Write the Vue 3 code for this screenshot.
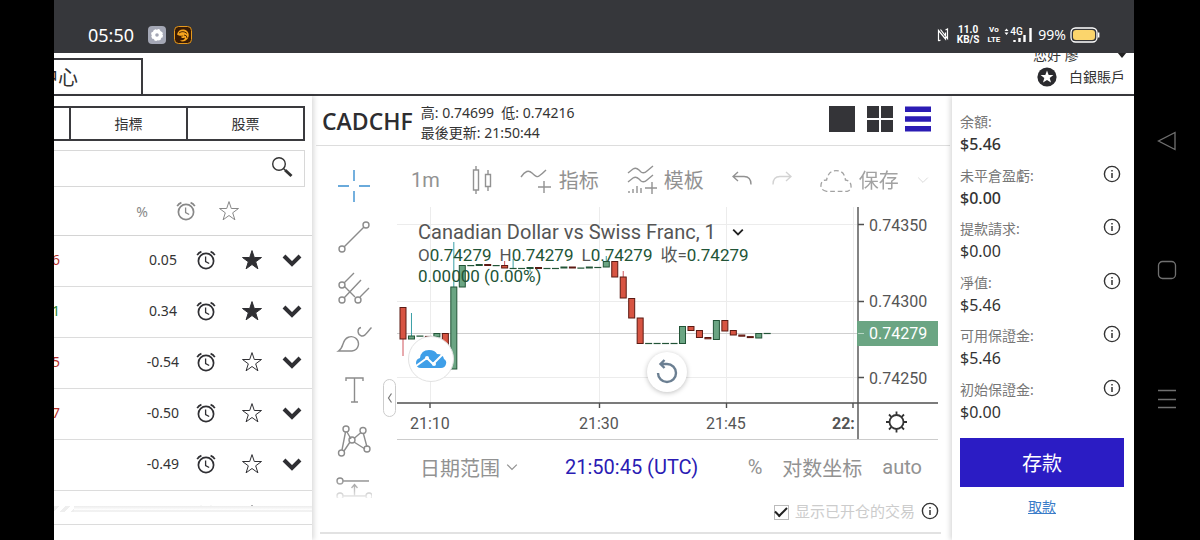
<template>
  <div class="device">
    <svg class="sprite" aria-hidden="true">
      <symbol id="clock" viewBox="0 0 20 20">
        <g fill="none" stroke="currentColor" stroke-width="1.7">
          <circle cx="10" cy="11" r="7.6" />
          <path d="M9.6 6.5v5l3.6 2" stroke-width="1.3" />
          <path d="M1.2 5.2Q2.6 2.6 5.4 1.6M18.8 5.2Q17.4 2.6 14.6 1.6" />
        </g>
      </symbol>
      <symbol id="star" viewBox="0 0 22 22">
        <path d="M11 1.6l2.3 6.9h7.2l-5.8 4.3 2.2 7-5.9-4.3-5.9 4.3 2.2-7L1.5 8.5h7.2z" stroke="currentColor" stroke-width="1" />
      </symbol>
      <symbol id="info" viewBox="0 0 18 18">
        <circle cx="9" cy="9" r="7.6" fill="none" stroke="currentColor" stroke-width="1.4" />
        <path d="M9 8v5M9 5v1.6" stroke="currentColor" stroke-width="1.5" />
      </symbol>
      <symbol id="chevron" viewBox="0 0 20 20">
        <path d="M2 6l8 8 8-8" fill="none" stroke="currentColor" />
      </symbol>
    </svg>

    <div class="bezel"></div>

    <div class="screen">
      <header class="status">
        <span class="time">05:50</span>
        <svg class="app-icon" viewBox="0 0 18 18">
          <rect width="18" height="18" rx="4" fill="#a4a7b5" />
          <circle cx="9" cy="9" r="3.6" fill="none" stroke="#fff" stroke-width="3.6" />
          <circle cx="9" cy="9" r="5.2" fill="none" stroke="#fff" stroke-width="1.5" stroke-dasharray="2.4 1.7" />
        </svg>
        <svg class="app-icon" viewBox="0 0 18 18">
          <rect x=".5" y=".5" width="17" height="17" rx="4" fill="#3a1c05" stroke="#e89a1c" />
          <path d="M3 8.5C4 4 9 2 13 5c3 3 2 8-2 10-2 .8-4 .5-5-.5 3 0 5-1 5-3-2 1-4 .5-4-1 1 .3 2 0 2.5-1C7 10 5 10 3 8.5z" fill="#f7a51e" />
          <path d="M5 7q4-3 8 .5M10 9q3 0 3 3" fill="none" stroke="#3a1c05" stroke-width=".9" />
        </svg>
        <div class="signals">
          <svg class="nfc" viewBox="0 0 12 14"><path d="M1.500 13V2.500l7 8.500V4.500M1.500 13l2-1M3.500 1.500l7 9V1l-2 1" fill="none" stroke="#fff" stroke-width="1.200" /></svg>
          <span class="stack rate"><b>11.0</b><b>KB/S</b></span>
          <span class="stack lte"><b>Vo</b><b>LTE</b></span>
          <span class="cell">
            <svg viewBox="0 0 30 16">
              <path d="M.5 4L2.500 1.500 4.500 4zM.5 5.500L2.500 8l2-2.500z" fill="#fff" />
              <path d="M10.500 15v-2M15.500 15v-4M20.500 15V8M26.500 15V1" stroke="#fff" stroke-width="2.400" />
            </svg>
            <b>4G</b>
          </span>
          <span class="percent">99%</span>
          <svg class="battery" viewBox="0 0 30 16">
            <rect x="1" y="1" width="26" height="14" rx="4.5" fill="none" stroke="#fff" stroke-width="1.3" />
            <rect x="3" y="3" width="22" height="10" rx="3" fill="#fbd56c" />
            <path d="M28.700 5.500v5" stroke="#fff" stroke-width="1.400" />
          </svg>
        </div>
      </header>

      <div class="topbar">
        <button class="page-tab"><span>中心</span></button>
        <div class="user">
          <div class="greeting"><span>您好 廖</span><svg viewBox="0 0 10 6"><path d="M0 0h10L5 6z" fill="#222" /></svg></div>
          <div class="level">
            <svg viewBox="0 0 20 20">
              <circle cx="10" cy="10" r="9.6" fill="#2a2a2e" />
              <path d="M10 3.500l1.700 4.400 4.700.2-3.700 3 1.300 4.500-4-2.600-4 2.600 1.300-4.500-3.700-3 4.700-.2z" fill="#fff" />
            </svg>
            <span>白銀賬戶</span>
          </div>
        </div>
      </div>

      <main class="workspace">
        <section class="watchlist">
          <nav class="tabs">
            <button></button>
            <button>指標</button>
            <button>股票</button>
          </nav>
          <div class="search">
            <input type="text" aria-label="search" />
            <button aria-label="search">
              <svg viewBox="0 0 22 22">
                <circle cx="8" cy="8" r="6.3" fill="none" stroke="#333" stroke-width="1.4" />
                <path d="M12.500 12.500l1.500 1.500" stroke="#333" stroke-width="1.400" />
                <path d="M14 14l6.500 6" stroke="#333" stroke-width="3" />
              </svg>
            </button>
          </div>
          <div class="list-head">
            <span>%</span>
            <svg class="i20"><use href="#clock" /></svg>
            <svg class="i22 hollow"><use href="#star" /></svg>
          </div>
          <div class="rows">
            <div v-for="(row, i) in rows" :key="i" class="row">
              <span class="price" :class="row.dir"><span>{{ row.price }}</span></span>
              <span class="change">{{ row.change }}</span>
              <button aria-label="alert"><svg class="i20"><use href="#clock" /></svg></button>
              <button aria-label="favourite"><svg class="i22" :class="row.fav ? 'solid' : 'hollow'"><use href="#star" /></svg></button>
              <button aria-label="expand"><svg class="i20 thick"><use href="#chevron" /></svg></button>
            </div>
          </div>
          <div class="list-foot"></div>
        </section>

        <section class="chart-panel">
          <div class="chart-head">
            <h1>CADCHF</h1>
            <p>高: 0.74699&nbsp; 低: 0.74216<br />最後更新: 21:50:44</p>
            <div class="views">
              <button aria-label="single"><svg viewBox="0 0 26 26"><path d="M0 0h26v26H0z" fill="#343438" /></svg></button>
              <button aria-label="grid"><svg viewBox="0 0 26 26"><path d="M0 0h12v12H0zM14 0h12v12H14zM0 14h12v12H0zM14 14h12v12H14z" fill="#343438" /></svg></button>
              <button aria-label="list"><svg viewBox="0 0 26 26"><path d="M0 .5h26v5.500H0zM0 10.200h26v5.500H0zM0 20h26v5.500H0z" fill="#2b1cb4" /></svg></button>
            </div>
          </div>

          <div class="chart-body">
            <div class="tools">
              <button aria-label="cross"><svg class="blue" viewBox="0 0 36 36"><path d="M18 2v11M18 23v11M2 18h11M23 18h11" /></svg></button>
              <button aria-label="line"><svg viewBox="0 0 36 36"><path d="M8 28L28 8" /><circle cx="6" cy="30" r="3" /><circle cx="30" cy="6" r="3" /></svg></button>
              <button aria-label="pitchfork">
                <svg viewBox="0 0 36 36"><path d="M8 28L25 10M8 13L18 3M8 16l11 11M24 27l9-9M14 22l0 0" /><circle cx="6" cy="15" r="3" /><circle cx="6" cy="30" r="3" /><circle cx="22" cy="30" r="3" /></svg>
              </button>
              <button aria-label="brush">
                <svg viewBox="0 0 36 36"><path d="M2.500 30q3-2 4.500-7c2-7 8-9 12.500-6 5 4 3.500 12-3.500 13zM25 6.500c-4 1-4 7 .5 8.500 3 .5 4-1.500 10-8.500" /></svg>
              </button>
              <button aria-label="text"><svg viewBox="0 0 36 36"><path d="M10 9V6h17v3M18.500 6v24M15 30h7" /></svg></button>
              <button aria-label="pattern">
                <svg viewBox="0 0 36 36"><path d="M9.500 9L6 27M11 9l4 7M25 9.500l-7 6M27.500 11L31 24M8 28l6-9M18 19l11 7" /><circle cx="10" cy="6" r="3" /><circle cx="27" cy="7.5" r="3" /><circle cx="16" cy="17" r="3" /><circle cx="5.5" cy="30" r="3" /><circle cx="31" cy="26" r="3" /></svg>
              </button>
              <button class="faded" aria-label="position">
                <svg viewBox="0 0 36 36"><path d="M7 7h26M18.500 22V11M15.500 14l3-3.500 3 3.500M7 22h23" /><circle cx="4" cy="7" r="3" /><circle cx="4" cy="22" r="3" /><circle cx="33" cy="22" r="3" /></svg>
              </button>
            </div>

            <div class="chart-main">
              <div class="toolbar">
                <button>1m</button>
                <button aria-label="candles"><svg class="w24" viewBox="2 0 24 30"><path d="M7.500 5h5v20h-5zM10 1v4M10 25v4M19.500 9.500h5v12h-5zM22 5v4.500M22 21.500v4.500" /></svg></button>
                <button><svg class="w32" viewBox="0 0 32 30"><path d="M1 12q6-9 11-4t7 3q3-2 7-6M24 16v12M18 22h13" /></svg>指标</button>
                <button>
                  <svg class="w30" viewBox="0 0 30 30"><path d="M1 8l5-4q3-2 6 1l2 2q3 2 6-1l6-5M1 17l5-4q3-2 6 1l2 2q3 2 6-1l6-5M25 17v12M18 23h12M2 26v2M6 24v4M10 21v7M14 23v5" /></svg>模板
                </button>
                <div class="history">
                  <button aria-label="undo"><svg class="w20" viewBox="0 0 20 20"><path d="M6 2L1 6.500 6 11M1 6.500h11q7 0 7 8" /></svg></button>
                  <button class="off" aria-label="redo"><svg class="w20" viewBox="0 0 20 20"><path d="M14 2l5 4.500-5 4.500M19 6.500H8q-7 0-7 8" /></svg></button>
                </div>
                <button class="save">
                  <svg class="w32" viewBox="0 0 34 30"><path d="M7 27q-6-1-6-6 0-6 6-6 2-10 10-10 9 0 10 10 6 1 6 7 0 4-4 5z" stroke-dasharray="5 3" /></svg>保存
                </button>
                <button class="off" aria-label="more"><svg class="w12"><use href="#chevron" /></svg></button>
              </div>

              <div class="plot">
                <svg class="canvas" viewBox="397 207 541 233">
                  <path class="grid" d="M397 224.500h460M397 301.500h460M397 377.500h460M430.500 207v196M599.500 207v196M726.500 207v196M853.500 207v196" />
                  <path class="last" d="M397 333.500h460" />
                  <g v-for="(c, i) in candles" :key="i">
                    <path v-if="c.hi" :d="`M${cx(i)} ${c.hi}V${c.top}`" :stroke="c.up ? '#3a9fa6' : '#d0555c'" />
                    <path v-if="c.lo" :d="`M${cx(i)} ${c.bottom}V${c.lo}`" :stroke="c.up ? '#3a9fa6' : '#d0555c'" />
                    <rect :x="cx(i) - 3" :y="c.top" width="6" :height="c.bottom - c.top" :class="c.up ? 'up' : 'down'" />
                  </g>
                  <path class="frame" d="M397 439.500h541" />
                  <path class="axis" d="M397 403h541M858 207v232M858 224.500h6M858 301.500h6M858 377.500h6M430 403v5M599.500 403v5M726.500 403v5M853 403v5" />
                  <rect x="857" y="321" width="81" height="25" fill="#6ba583" />
                  <path d="M858 333.500h6" stroke="#b9d8c6" />
                  <text v-for="p in prices" :key="p.label" x="869" :y="p.y" :class="{ current: p.current }">{{ p.label }}</text>
                  <text x="410" y="429">21:10</text>
                  <text x="579" y="429">21:30</text>
                  <text x="706" y="429">21:45</text>
                  <text x="832" y="429" class="bold">22:</text>
                  <g class="gear">
                    <circle cx="896.5" cy="422" r="7" />
                    <path d="M896.500 411.500v3M896.500 429.500v3M886 422h3M904 422h3M889 414.500l2.300 2.300M904 414.500l-2.300 2.300M889 429.500l2.300-2.300M904 429.500l-2.300-2.300" />
                  </g>
                </svg>
                <div class="legend">
                  <div class="name">Canadian Dollar vs Swiss Franc, 1 <svg class="w12"><use href="#chevron" /></svg></div>
                  <div class="ohlc">
                    <span>O<i>0.74279</i></span><span>H<i>0.74279</i></span><span>L<i>0.74279</i></span><span>收=<i>0.74279</i></span>
                  </div>
                  <div class="ohlc"><i>0.00000 (0.00%)</i></div>
                </div>
                <span class="logo">
                  <svg viewBox="0 0 32 20">
                    <path d="M6 19q-5 0-5-5 0-4 4-5 1-8 9-8 6 0 8 4 6 0 7 5 3 2 2 5-1 4-5 4z" fill="#3f9fe8" />
                    <path d="M1 17l11-8 6 6 10-10" fill="none" stroke="#fff" stroke-width="2" />
                    <circle cx="12" cy="9" r="2" fill="#fff" /><circle cx="19" cy="15" r="2" fill="#fff" />
                  </svg>
                </span>
                <button class="reset" aria-label="reset">
                  <svg viewBox="0 0 24 26"><path d="M3 14a9 9 0 1 0 9-9H6M9.500 1L5.500 5l4 4" fill="none" stroke="#6b7f92" stroke-width="2.400" /></svg>
                </button>
                <button class="collapse" aria-label="collapse"><svg viewBox="0 0 6 12"><path d="M4.500 1.500L1.500 6l3 4.500" fill="none" stroke="#777" stroke-width="1.200" /></svg></button>
              </div>

              <div class="rangebar">
                <button>日期范围<svg class="w12"><use href="#chevron" /></svg></button>
                <button class="utc">21:50:45 (UTC)</button>
                <div class="scales">
                  <button>%</button>
                  <button>对数坐标</button>
                  <button>auto</button>
                </div>
              </div>
            </div>
          </div>

          <div class="options">
            <input id="show-open" type="checkbox" checked />
            <label for="show-open">显示已开仓的交易</label>
            <svg class="i18"><use href="#info" /></svg>
          </div>
        </section>

        <aside class="account">
          <dl>
            <div v-for="(item, i) in balances" :key="item.label">
              <dt>{{ item.label }}<svg v-if="i > 0" class="i18"><use href="#info" /></svg></dt>
              <dd :class="{ strong: i < 2 }">{{ item.value }}</dd>
            </div>
          </dl>
          <button class="deposit">存款</button>
          <a href="#" class="withdraw">取款</a>
        </aside>
      </main>
    </div>

    <nav class="keys">
      <button aria-label="back"><svg viewBox="0 0 20 20"><path d="M18 1.500v17L1.500 10z" /></svg></button>
      <button aria-label="home"><svg viewBox="0 0 20 20"><rect x="1.5" y="1.5" width="17" height="17" rx="4" /></svg></button>
      <button aria-label="recent"><svg viewBox="0 0 20 20"><path d="M1 1.500h18M1 10.500h18M1 18.500h18" /></svg></button>
    </nav>
  </div>
</template>

<script setup>
const rows = [
  { price: '6', dir: 'fall', change: '0.05', fav: true },
  { price: '1', dir: 'rise', change: '0.34', fav: true },
  { price: '5', dir: 'fall', change: '-0.54', fav: false },
  { price: '7', dir: 'fall', change: '-0.50', fav: false },
  { price: '', dir: 'fall', change: '-0.49', fav: false },
  { price: '', dir: 'fall', change: '', fav: false },
]

const balances = [
  { label: '余額:', value: '$5.46' },
  { label: '未平倉盈虧:', value: '$0.00' },
  { label: '提款請求:', value: '$0.00' },
  { label: '凈值:', value: '$5.46' },
  { label: '可用保證金:', value: '$5.46' },
  { label: '初始保證金:', value: '$0.00' },
]

const prices = [
  { label: '0.74350', y: 231 },
  { label: '0.74300', y: 307 },
  { label: '0.74279', y: 339, current: true },
  { label: '0.74250', y: 384 },
]

const cx = (i) => 403 + i * 8.47

// up?, top, bottom, high, low
const candles = [
  [0, 307.5, 339, 0, 356],
  [1, 336, 339, 313],
  [1, 336, 336.2],
  [0, 336.4, 336.6],
  [1, 333.5, 337],
  [0, 333.5, 346],
  [1, 287, 369, 242],
  [1, 265.5, 287],
  [1, 265.5, 265.7],
  [1, 264.5, 265.5],
  [0, 264.5, 265.5],
  [1, 265.5, 265.7],
  [0, 265.5, 268, 261],
  [1, 268.4, 268.6, 259],
  [1, 268.4, 268.6],
  [1, 267.5, 268.5, 0, 272],
  [0, 267.5, 268.5],
  [1, 268.4, 268.6],
  [1, 268.4, 268.6],
  [1, 267, 268],
  [0, 267, 268],
  [1, 268, 268.2],
  [1, 267, 268],
  [1, 267.4, 267.6],
  [1, 261.5, 267, 256],
  [0, 261.5, 277],
  [0, 277, 298, 271],
  [0, 298.5, 318],
  [0, 318, 343.5],
  [1, 343.4, 343.6],
  [1, 343.4, 343.6],
  [1, 343.4, 343.6],
  [1, 343.4, 343.6],
  [1, 326.5, 343.5],
  [0, 326.5, 330.5],
  [0, 330.5, 337.5],
  [0, 337.5, 338.8],
  [1, 320.5, 339.5],
  [0, 320.5, 331],
  [0, 330.5, 335],
  [0, 335, 336.2],
  [0, 336.6, 337.6],
  [1, 333.5, 338],
  [1, 333.4, 333.6],
].map(([up, top, bottom, hi, lo]) => ({ up, top, bottom, hi, lo }))
</script>

<style>
body {
  background: #000;
}
</style>

<style scoped>
* {
  box-sizing: border-box;
}
.device {
  display: flex;
  height: 100vh;
  overflow: hidden;
  background: #000;
  color: #333;
  font-family: "Noto Sans", "Noto Sans CJK TC", sans-serif;
  font-size: 14px;
}
.sprite {
  position: absolute;
  width: 0;
  height: 0;
}
svg {
  display: block;
  flex: none;
}
button {
  display: flex;
  align-items: center;
  justify-content: center;
  padding: 0;
  border: 0;
  background: none;
  color: inherit;
  font: inherit;
  cursor: pointer;
}
.bezel {
  width: 54px;
  flex: none;
}
.i18 { width: 18px; height: 18px; }
.i20 { width: 20px; height: 20px; }
.i22 { width: 22px; height: 22px; }
.hollow { fill: none; }
.solid { fill: currentColor; }
.thick { stroke-width: 4px; }

.screen {
  flex: 1;
  min-width: 0;
  display: flex;
  flex-direction: column;
  background: #fff;
}

/* status bar */
.status {
  display: flex;
  align-items: center;
  gap: 8px;
  height: 53px;
  flex: none;
  padding: 16px 34px 0;
  background: #36373b;
  color: #fff;
}
.time {
  font-size: 18px;
  margin-right: 6px;
}
.app-icon {
  width: 18px;
  height: 18px;
}
.signals {
  display: flex;
  align-items: center;
  gap: 4px;
  margin-left: auto;
}
.nfc {
  width: 12px;
  height: 14px;
  margin-right: 4px;
}
.stack {
  display: flex;
  flex-direction: column;
  align-items: center;
  font-family: Roboto, sans-serif;
  line-height: 10px;
}
.rate {
  font-size: 10px;
  margin-right: 4px;
}
.lte {
  font-size: 8px;
}
.cell {
  position: relative;
}
.cell svg {
  width: 30px;
  height: 16px;
}
.cell b {
  position: absolute;
  left: 6px;
  top: 0;
  font: 500 10px/10px Roboto, sans-serif;
}
.battery {
  width: 30px;
  height: 16px;
}

/* top bar */
.topbar {
  display: flex;
  justify-content: space-between;
  height: 43px;
  flex: none;
  padding-top: 5px;
  border-bottom: 2px solid #3a3a3e;
  overflow: hidden;
}
.page-tab {
  width: 89px;
  justify-content: flex-start;
  border: solid #3a3a3e;
  border-width: 2px 2px 0 0;
  font-size: 20px;
}
.page-tab span {
  display: flex;
  justify-content: flex-end;
  width: 24px;
  padding-bottom: 2px;
  white-space: nowrap;
}
.user {
  display: flex;
  flex-direction: column;
  justify-content: flex-end;
  padding: 0 9px 7px;
}
.greeting {
  display: flex;
  justify-content: space-between;
  align-items: center;
  padding: 0 0 2px;
  margin-right: -2px;
  line-height: 20px;
}
.greeting svg {
  width: 10px;
  height: 6px;
}
.level {
  display: flex;
  align-items: center;
  gap: 12px;
  line-height: 20px;
  margin-left: 4px;
}
.level svg {
  width: 20px;
  height: 20px;
}

.workspace {
  flex: 1;
  min-height: 0;
  display: grid;
  grid-template-columns: 258px 1fr 182px;
}

/* watchlist */
.watchlist {
  display: flex;
  flex-direction: column;
  min-height: 0;
  padding-top: 10px;
  box-shadow: 2px 0 5px rgba(0, 0, 0, 0.15);
}
.tabs {
  display: flex;
  height: 35px;
  flex: none;
  margin-right: 7px;
  border: solid #3a3a3e;
  border-width: 2px 2px 2px 0;
}
.tabs button {
  flex: 1;
  padding-bottom: 2px;
}
.tabs button:first-child {
  flex: 0 0 15px;
}
.tabs button + button {
  border-left: 2px solid #3a3a3e;
}
.search {
  display: flex;
  height: 37px;
  flex: none;
  margin: 9px 7px 0 0;
  border: solid #d8d8d8;
  border-width: 1px 1px 1px 0;
}
.search input {
  flex: 1;
  min-width: 0;
  border: 0;
  outline: 0;
  background: none;
}
.search button {
  width: 44px;
  padding-bottom: 4px;
}
.search svg {
  width: 22px;
  height: 22px;
}
.list-head {
  display: grid;
  grid-template-columns: 44px 43px 43px;
  justify-content: end;
  justify-items: center;
  align-items: center;
  height: 49px;
  flex: none;
  padding-right: 62px;
  border-bottom: 1px solid #d4d4d4;
  color: #888;
}
.rows {
  flex: 1;
  min-height: 0;
  overflow: hidden;
}
.row {
  display: grid;
  grid-template-columns: 6px 1fr 46px 46px 34px;
  align-items: center;
  height: 51px;
  padding: 0 3px 3px 0;
  border-bottom: 1px solid #dcdcdc;
}
.price {
  display: flex;
  justify-content: flex-end;
  overflow: hidden;
}
.fall { color: #b8332c; }
.rise { color: #2f8a34; }
.change {
  width: 40px;
  justify-self: end;
  text-align: center;
}
.row svg {
  color: #2f2f33;
}
.list-foot {
  height: 19px;
  flex: none;
  margin-bottom: 15px;
  border-bottom: 1px solid #dcdcdc;
  background:
    repeating-linear-gradient(135deg, #eee 0 4px, #fff 4px 8px) 0 0 / 20px 6px no-repeat,
    linear-gradient(#ececec, #fff 4px, #fff 4px, #e4e4e4 5px, #fff 6px);
}

/* chart panel */
.chart-panel {
  display: flex;
  flex-direction: column;
  min-width: 0;
  margin: 0 2px 0 4px;
}
.chart-head {
  display: flex;
  align-items: center;
  gap: 8px;
  height: 50px;
  flex: none;
  padding: 0 19px 0 6px;
  border-bottom: 1px solid #ddd;
}
h1 {
  margin: 0;
  font: 600 23px "Open Sans", sans-serif;
  color: #2d2d30;
}
.chart-head p {
  margin: 4px 0 0;
  line-height: 20px;
}
.views {
  display: flex;
  gap: 12px;
  margin-left: auto;
  padding-bottom: 4px;
}
.views svg {
  width: 26px;
  height: 26px;
}
.chart-body {
  display: flex;
  height: 352px;
  flex: none;
}
.tools {
  display: flex;
  flex-direction: column;
  width: 74px;
  flex: none;
  padding: 14px 0 0 2px;
  overflow: hidden;
}
.tools button {
  height: 51px;
  flex: none;
}
.tools svg {
  width: 36px;
  height: 36px;
  fill: none;
  stroke: #8c8c8c;
  stroke-width: 1.4px;
}
.tools .blue {
  stroke: #3a8fd0;
}
.faded {
  -webkit-mask-image: linear-gradient(#000 25%, transparent 70%);
  mask-image: linear-gradient(#000 25%, transparent 70%);
}
.chart-main {
  flex: 1;
  min-width: 0;
  font-family: Roboto, "Noto Sans CJK SC", sans-serif;
}
.toolbar {
  display: flex;
  align-items: center;
  gap: 28px;
  height: 61px;
  padding: 6px 0 0 21px;
  color: #929292;
  font-size: 20px;
}
.toolbar button {
  gap: 7px;
}
.toolbar svg {
  height: 30px;
  fill: none;
  stroke: currentColor;
  stroke-width: 1.4px;
}
.history {
  display: flex;
  gap: 20px;
}
.history svg {
  height: 20px;
}
.off {
  opacity: 0.4;
}
.save {
  margin-right: -10px;
  opacity: 0.85;
}
.w12 { width: 12px; }
.w20 { width: 20px; }
.w24 { width: 24px; }
.w30 { width: 30px; }
.w32 { width: 32px; }
.plot {
  position: relative;
  padding: 0 12px 0 7px;
}
.canvas {
  width: 100%;
  height: auto;
}
.canvas text {
  font-size: 16px;
  fill: #555;
}
.canvas .current {
  fill: #fff;
}
.canvas .bold {
  font-weight: 700;
}
.grid { stroke: #ececec; }
.last { stroke: #cfcfcf; }
.frame { stroke: #ccc; }
.axis {
  stroke: #505050;
  stroke-width: 1.4px;
}
.up {
  fill: #6ba583;
  stroke: #225437;
}
.down {
  fill: #d75442;
  stroke: #5b1a13;
}
.gear {
  fill: none;
  stroke: #333;
  stroke-width: 1.8px;
}
.legend {
  position: absolute;
  left: 28px;
  top: 13px;
  color: #555;
  white-space: nowrap;
}
.name {
  display: flex;
  align-items: center;
  gap: 16px;
  font-size: 20px;
  line-height: 24px;
}
.name svg {
  height: 12px;
  color: #222;
  stroke-width: 3px;
}
.ohlc {
  display: flex;
  gap: 8px;
  font-size: 17px;
  line-height: 21px;
}
.name + .ohlc {
  margin-top: 1px;
}
.ohlc i {
  font-style: normal;
  color: #225437;
}
.logo,
.reset {
  position: absolute;
  display: flex;
  align-items: center;
  justify-content: center;
  border-radius: 50%;
  background: #fff;
}
.logo {
  left: 18px;
  top: 129px;
  width: 46px;
  height: 46px;
  border: 1px solid #e2e2e2;
}
.logo svg {
  width: 32px;
  height: 20px;
}
.reset {
  left: 257px;
  top: 145px;
  width: 40px;
  height: 40px;
  box-shadow: 0 1px 5px rgba(0, 0, 0, 0.25);
}
.reset svg {
  width: 24px;
  height: 26px;
}
.collapse {
  position: absolute;
  left: -7px;
  top: 172px;
  width: 13px;
  height: 38px;
  border: 1px solid #ccc;
  border-radius: 7px;
  background: #fff;
}
.collapse svg {
  width: 6px;
  height: 12px;
}
.rangebar {
  display: flex;
  align-items: center;
  height: 54px;
  padding: 0 28px 0 30px;
  color: #929292;
  font-size: 20px;
}
.rangebar button {
  gap: 6px;
}
.rangebar svg {
  height: 12px;
  stroke-width: 2px;
}
.rangebar .utc {
  margin-left: 47px;
  color: #2b1cb4;
}
.scales {
  display: flex;
  gap: 20px;
  margin-left: auto;
}
.options {
  display: flex;
  align-items: center;
  justify-content: flex-end;
  gap: 6px;
  height: 36px;
  flex: none;
  margin: 0 9px 0 4px;
  padding: 0 2px 9px 0;
  border-bottom: 2px solid #e2e2e2;
}
.options input {
  appearance: none;
  width: 15px;
  height: 15px;
  margin: 3px 0 0;
  border: 1px solid #bbb;
  display: grid;
  place-items: center;
}
.options input:checked::before {
  content: "";
  width: 10px;
  height: 5px;
  margin-bottom: 3px;
  border: solid #222;
  border-width: 0 0 2px 2px;
  transform: rotate(-45deg);
}
.options label {
  font: 15px "Noto Sans CJK SC", sans-serif;
  color: #ccc;
}

/* account */
.account {
  display: flex;
  flex-direction: column;
  padding: 15px 10px 0 8px;
  box-shadow: -2px 0 5px rgba(0, 0, 0, 0.15);
}
dl {
  flex: 1;
  display: flex;
  flex-direction: column;
  justify-content: space-between;
  margin: 0 0 15px;
}
dt {
  display: flex;
  justify-content: space-between;
  line-height: 22px;
  color: #777;
}
dt svg {
  color: #333;
  margin-right: 3px;
}
dd {
  margin: 0;
  font-size: 16px;
  line-height: 22px;
}
.strong {
  font-weight: 500;
}
.deposit {
  height: 49px;
  background: #2b1cc4;
  color: #fff;
  font-size: 20px;
}
.withdraw {
  height: 53px;
  line-height: 40px;
  text-align: center;
  color: #3a7cc8;
}

/* system keys */
.keys {
  width: 66px;
  flex: none;
  display: flex;
  flex-direction: column;
  align-items: center;
  justify-content: center;
  gap: 109px;
}
.keys svg {
  width: 20px;
  height: 20px;
  fill: none;
  stroke: #707070;
  stroke-width: 1.3px;
}
</style>
